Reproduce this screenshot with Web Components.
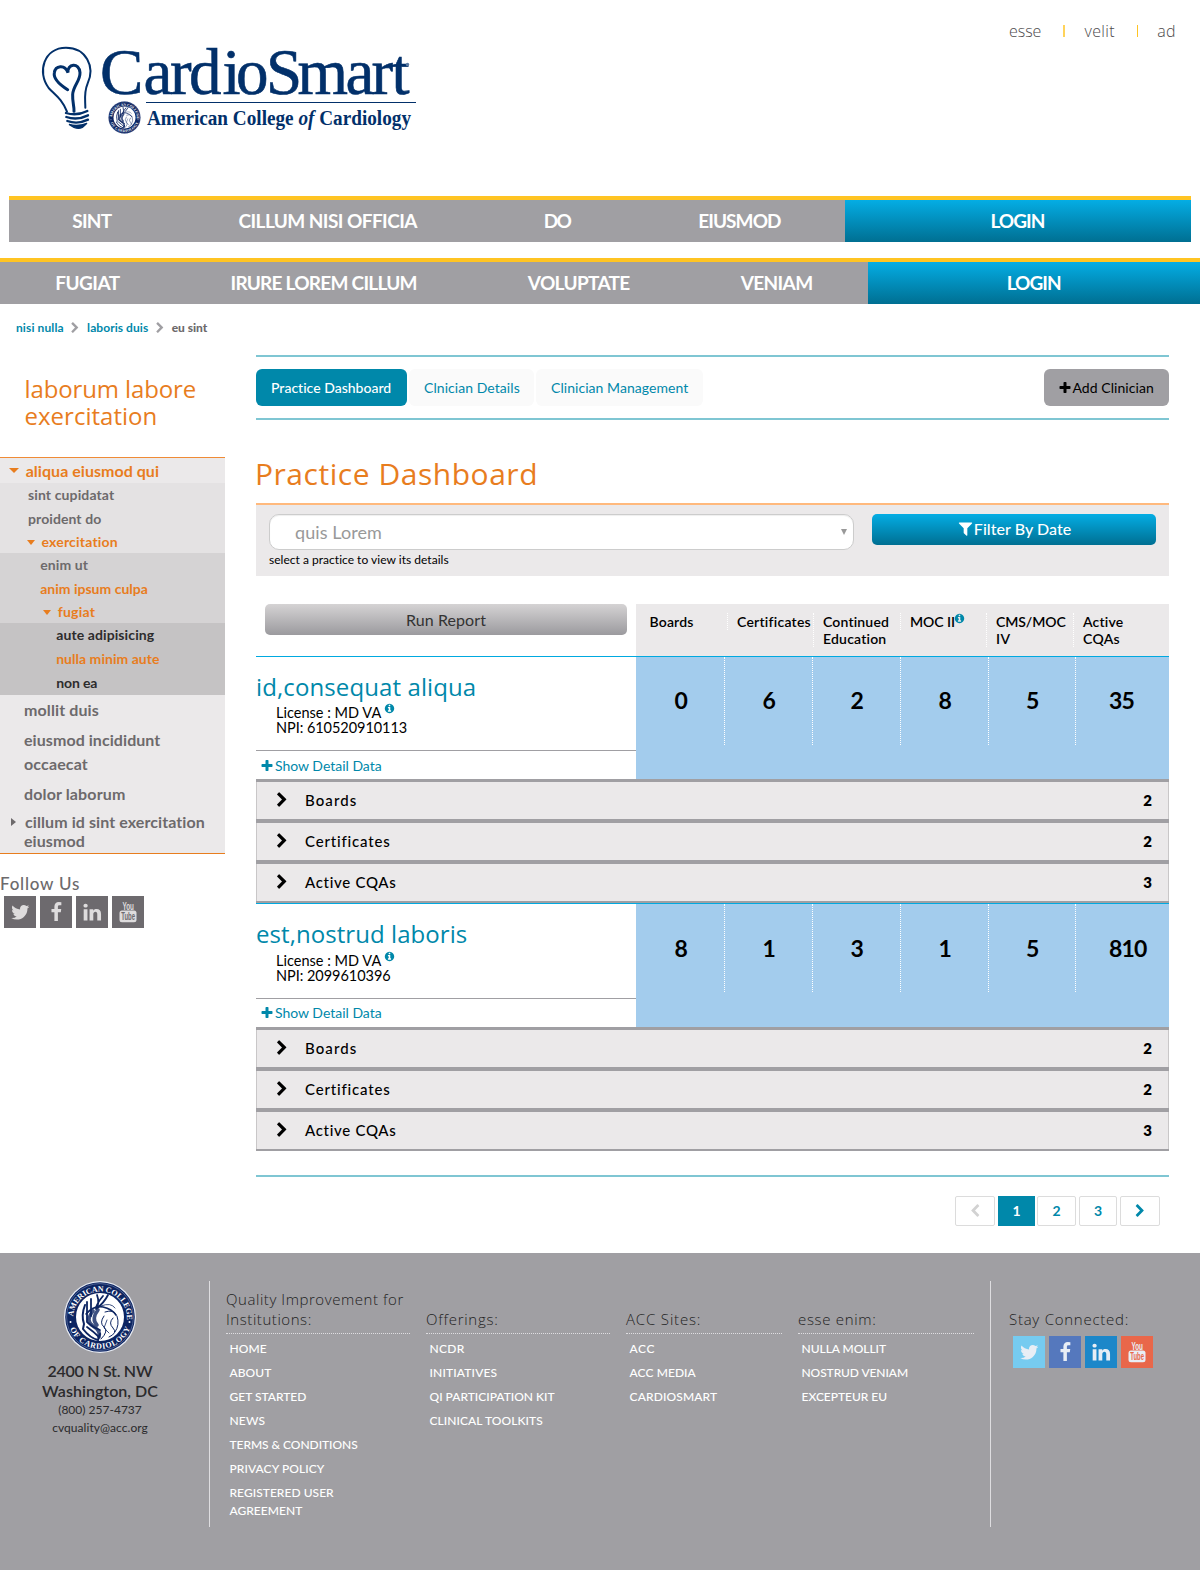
<!DOCTYPE html>
<html lang="en">
<head>
<meta charset="utf-8">
<title>Practice Dashboard</title>
<style>
body{margin:0;background:#fff;font-family:Lato,"Liberation Sans",sans-serif;color:#000;--teal:#0088aa;--orange:#e87d1e;--grey:#a09fa3;--text:#6d6a6c;--panel:#ebe9ea;--thin:"Open Sans","Noto Sans",sans-serif}
</style>
</head>
<body>
<app-page></app-page>
<script>
const ICONS={
chevron:'M1363 877l-742 742q-19 19-45 19t-45-19l-166-166q-19-19-19-45t19-45l531-531-531-531q-19-19-19-45t19-45l166-166q19-19 45-19t45 19l742 742q19 19 19 45t-19 45z',
plus:'M1600 736v192q0 40-28 68t-68 28h-416v416q0 40-28 68t-68 28h-192q-40 0-68-28t-28-68v-416h-416q-40 0-68-28t-28-68v-192q0-40 28-68t68-28h416v-416q0-40 28-68t68-28h192q40 0 68 28t28 68v416h416q40 0 68 28t28 68z',
filter:'M1595 295q17 41-14 70l-493 493v742q0 42-39 59-13 5-25 5-27 0-45-19l-256-256q-19-19-19-45v-486l-493-493q-31-29-14-70 17-39 59-39h1280q42 0 59 39z',
info:'M1152 1376v-160q0-14-9-23t-23-9h-96v-512q0-14-9-23t-23-9h-320q-14 0-23 9t-9 23v160q0 14 9 23t23 9h96v320h-96q-14 0-23 9t-9 23v160q0 14 9 23t23 9h448q14 0 23-9t9-23zm-128-896v-160q0-14-9-23t-23-9h-192q-14 0-23 9t-9 23v160q0 14 9 23t23 9h192q14 0 23-9t9-23zm640 416q0 209-103 385.5t-279.5 279.5-385.5 103-385.5-103-279.5-279.5-103-385.5 103-385.5 279.5-279.5 385.5-103 385.5 103 279.5 279.5 103 385.5z',
twitter:'M1684 408q-67 98-162 167 1 14 1 42 0 130-38 259.5t-115.5 248.5-184.5 210.5-258 146-323 54.5q-271 0-496-145 35 4 78 4 225 0 401-138-105-2-188-64.5t-114-159.5q33 5 61 5 43 0 85-11-112-23-185.5-111.5t-73.5-205.5v-4q68 38 146 41-66-44-105-115t-39-154q0-88 44-163 121 149 294.5 238.5t371.5 99.5q-8-38-8-74 0-134 94.5-228.5t228.5-94.5q140 0 236 102 109-21 205-78-37 115-142 178 93-10 186-50z',
facebook:'M1343 12v264h-157q-86 0-116 36t-30 108v189h293l-39 296h-254v759h-306v-759h-255v-296h255v-218q0-186 104-288.5t277-102.5q147 0 228 12z',
linkedin:'M477 625v991h-330v-991h330zm21-306q1 73-50.5 122t-135.5 49h-2q-82 0-132-49t-50-122q0-74 51.5-122.5t134.5-48.5 133 48.5 51 122.5zm1166 729v568h-329v-530q0-105-40.5-164.5t-126.5-59.5q-63 0-105.5 34.5t-63.5 85.5q-11 30-11 81v553h-329q2-399 2-647t-1-296l-1-48h329v144h-2q20-32 41-56t56.5-52 87-43.5 114.5-15.5q171 0 275 113.5t104 332.5z'
};
const define=(name,css,html,after)=>customElements.define(name,class extends HTMLElement{
  connectedCallback(){
    if(this.shadowRoot)return;
    const root=this.attachShadow({mode:'open'});
    root.innerHTML=`<style>*{box-sizing:border-box}:host{display:block;box-sizing:border-box}${css}</style>`+(typeof html==='function'?html(this):html);
    if(after)after(this,root);
  }
});
const T=(w,t)=>`<fit-text w="${w}">${t}</fit-text>`;
const attr=(el,n)=>el.getAttribute(n)||'';

define('fa-icon',`:host{display:inline-block;width:var(--s,14px);height:var(--s,14px);flex:none}svg{display:block;width:100%;height:100%;fill:currentColor}`,
 el=>`<svg viewBox="0 0 1792 1792"><path d="${ICONS[attr(el,'name')]}"/></svg>`);

define('acc-seal',`svg{display:block;width:100%;height:100%;overflow:visible}text{font:bold 8px "Liberation Serif",serif;fill:#fff}`,
 `<svg viewBox="0 0 72 72"><defs><path id="up" d="M9 37.500A27 27 0 1 1 63 37.500"/><path id="dn" d="M3.800 38A32.300 32.300 0 0 0 68.200 38"/></defs>
 <circle cx="36" cy="36" r="36" fill="#e8ecf4"/><circle cx="36" cy="36" r="34.8" fill="#0c2461"/><circle cx="36" cy="36" r="33.4" fill="none" stroke="#8c9cc0" stroke-width=".5"/>
 <circle cx="36" cy="36" r="24" fill="#fff"/>
 <text textLength="84"><textPath href="#up" startOffset="2">AMERICAN COLLEGE</textPath></text>
 <text textLength="77"><textPath href="#dn" startOffset="10">OF CARDIOLOGY</textPath></text>
 <circle cx="6.500" cy="41" r="1" fill="#fff"/><circle cx="65.500" cy="41" r="1" fill="#fff"/>
 <g fill="none" stroke="#0c2461" stroke-linecap="round"><path d="M21 24q-4 10-1 19l-1 5q7 9 15 11l2-6" stroke-width="2"/><path d="M23 21v20M27 18v17M33 14q3 8-1 14M39 15q-6 7-7 12M44 14q-4 8-12 14M23 46q7 5 12 10M24 42q6 5 12 7" stroke-width="1.800"/><path d="M22 33q8-9 17-7t13 8" stroke-width="1.600"/><path d="M29 30q-8 10 0 15t6 11M34 29q-7 9-1 15" stroke-width="3.600" opacity=".8"/><path d="M41 31q9-3 11 3M40 35q-5 7 0 11t-3 12M49 37q-5 5 0 10t-4 9M53 35q3 9-2 16" stroke-width="1"/><path d="M37 25q10-4 14 2M43 39l-3 8 5 5" stroke-width=".8"/></g></svg>`);

define('brand-logo',`:host{position:relative;width:440px;height:150px}svg{display:block}acc-seal{position:absolute;left:108px;top:101px;width:33px;height:33px}text{font-family:"Liberation Serif",serif;fill:#02306a}`,
 `<svg width="440" height="150" viewBox="0 0 440 150"><g transform="translate(0 20) scale(.33333)" fill="none" stroke="#02306a" stroke-linecap="round">
 <path d="M201 275C187 238 166 225 146 204C110 156 132 83 198 83C258 83 286 140 263 190C251 218 256 240 256 263" stroke-width="6"/>
 <path d="M203 209C178 193 160 175 163 158C166 137 194 131 204 158C200 132 238 125 240 158C241 184 219 197 218 224C217 248 223 259 222 274" stroke-width="9"/>
 <path d="M198 279Q230 289 262 273M199 291Q232 302 264 286M202 303Q233 314 264 299" stroke-width="7"/><path d="M207 313Q233 320 261 310L247 322Q236 328 222 322z" fill="#02306a" stroke-width="4"/></g>
 <text x="100 143.500 170 189 222.500 236 266 297.500 345.500 371.500 391.500" y="94" font-size="65" stroke="#02306a" stroke-width=".6">CardioSmart</text><circle cx="407.500" cy="64.500" r="1.700" fill="#5c7ca3"/>
 <path d="M146 102.500H416" stroke="#02306a"/>
 <text x="147" y="125" font-size="20.500" font-weight="bold" textLength="264" lengthAdjust="spacingAndGlyphs">American College <tspan font-style="italic">of</tspan> Cardiology</text></svg><acc-seal></acc-seal>`);

define('top-links',`:host{display:flex;align-items:center;height:22px;font:300 16px/22px var(--thin);color:#4d4a4c;padding-right:24.500px}i{width:1px;height:12px;background:#ffc423;margin:0 19.500px 0 22px}i.a{width:2px;opacity:.75;margin-left:22px;margin-right:19px}`,
 `${T(31.5,'esse')}<i class="a"></i>${T(29.5,'velit')}<i></i>${T(17.5,'ad')}`);

define('nav-bar',`:host{display:flex;height:46px;border-top:4px solid #ffc423;background:var(--grey);color:#fff;font:bold 19px/42px Lato,sans-serif}.i{flex:none;padding:0 var(--p)}.l{flex:1;text-align:center;background:linear-gradient(#04ade4,#006f92)}`,
 el=>attr(el,'items').split('|').map(x=>{const[t,w]=x.split(':');return`<div class="i">${T(w,t)}</div>`}).join('')+`<div class="l">${T(54,'LOGIN')}</div>`);

define('bread-crumb',`:host{display:flex;align-items:center;height:20px;padding-left:16px;font:bold 12px/20px Lato,sans-serif;color:var(--teal)}fa-icon{--s:12px;color:var(--grey);margin:0 6px 0 5.500px}b{color:var(--text)}`,
 `${T(47,'nisi nulla')}<fa-icon name="chevron"></fa-icon>${T(60.5,'laboris duis')}<fa-icon name="chevron"></fa-icon><b>${T(35,'eu sint')}</b>`);

define('menu-item',`:host{display:flex;align-items:center;height:var(--h,24px);line-height:var(--h,24px);padding-left:var(--x)}:host([active]){color:var(--orange)}:host([top]) i{margin-right:8px}i{width:0;height:0;margin-right:6.500px;flex:none}.down{border:4.500px solid transparent;border-bottom:0;border-top:5px solid}.right{border:4.500px solid transparent;border-right:0;border-left:5px solid}:host([top]) .right{margin-right:9px}:host([top]) .down{border-width:5px 5px 0;margin-right:7px}`,
 el=>`${attr(el,'caret')?`<i class="${attr(el,'caret')}"></i>`:''}<slot></slot>`);
const M=(x,h,w,t,e='')=>`<menu-item style="--x:${x}px;--h:${h}px" ${e}>${T(w,t)}</menu-item>`;
define('side-menu',`:host{width:225px;border-top:1px solid #ef8b36;border-bottom:1px solid var(--orange);background:var(--panel);font:bold 16px/24px Lato,sans-serif;color:var(--text)}section{font-size:14px}.a{background:#e4e2e3}.b{background:#d5d3d4}.c{background:#c5c3c4;color:#2d2c2d}`,
 M(8.7,25,132.5,'aliqua eiusmod qui','active top caret="down"')+
 `<section class="a">${M(28,24,85.5,'sint cupidatat')}${M(28,24,72.5,'proident do')}${M(27,22,75.5,'exercitation','active caret="down"')}</section>
 <section class="b">${M(40.2,24,47,'enim ut')}${M(40.2,24,107,'anim ipsum culpa','active')}${M(43.2,22,36.5,'fugiat','active caret="down"')}</section>
 <section class="c">${M(56.2,24,97.3,'aute adipisicing')}${M(56.2,24,102.5,'nulla minim aute','active')}${M(56.2,24,40.5,'non ea')}</section>
 <div style="padding-top:3px">${M(24,24,74,'mollit duis')}</div><div style="padding-top:6px">${M(24,24,135.5,'eiusmod incididunt')}${M(24,24,63,'occaecat')}</div>
 <div style="padding-top:6px">${M(24,24,100.5,'dolor laborum')}</div><div style="padding:6px 0 3px">${M(11,20,179,'cillum id sint exercitation','top caret="right"')}${M(24,18,60,'eiusmod')}</div>`);

define('social-row',`:host{display:flex;gap:4px}span{width:32px;height:32px;display:grid;place-items:center;background:var(--c,#6d6a6e);color:#dedcdd}svg{display:block;overflow:visible}:host([colour]) span{color:#e8eef5}fa-icon{--s:20.500px}text{font:bold 10px "Liberation Sans",sans-serif}`,
 el=>{const c=el.hasAttribute('colour')?['#76cbf0','#5578bd','#1c87c9','#e9674a']:[];const s=i=>c[i]?`style="--c:${c[i]}"`:'';
 return`<span ${s(0)}><fa-icon name="twitter"></fa-icon></span><span ${s(1)}><fa-icon name="facebook"></fa-icon></span><span ${s(2)}><fa-icon name="linkedin"></fa-icon></span><span ${s(3)}><svg width="18" height="22" viewBox="0 0 18 22" fill="currentColor"><text x="3.500" y="8.600" style="font-size:11px" textLength="11.500" lengthAdjust="spacingAndGlyphs">You</text><rect x=".500" y="9.600" width="17" height="11.700" rx="2.500"/><text x="2.200" y="19.300" textLength="13.800" lengthAdjust="spacingAndGlyphs" style="fill:${c[3]||'#6d6a6e'}">Tube</text></svg></span>`});

define('tab-bar',`:host{display:flex;align-items:center;height:65px;border-top:2px solid #7fc6d3;border-bottom:2px solid #7fc6d3;font:14px/37px Lato,sans-serif;color:var(--teal)}div{height:37px;border-radius:6px;background:#fafafa;padding:0 15px;margin-right:2px}.on{background:var(--teal);color:#fff;width:151px;font-weight:500}.add{margin:0 0 0 auto;background:var(--grey);color:#000;display:flex;align-items:center;width:125px}fa-icon{--s:14px;margin-right:1px;margin-left:-1.500px}`,
 `<div class="on">${T(119.5,'Practice Dashboard')}</div><div style="width:125px">${T(95,'Clnician Details')}</div><div style="width:167px">${T(136.5,'Clinician Management')}</div><div class="add"><fa-icon name="plus"></fa-icon>${T(80.5,'Add Clinician')}</div>`);

define('filter-panel',`:host{display:flex;height:73px;border-top:2px solid #ffb97d;background:var(--panel);padding:9px 13px 0;gap:18px}.sel{display:flex;align-items:center;justify-content:space-between;width:585px;height:36px;background:#fff;border:1px solid #ccc;border-radius:10px;box-shadow:inset 0 1px 1px #0001;font-size:18px;color:#999;padding:0 6px 0 25px}.sel i{border:3px solid transparent;border-top:6px solid #999;border-bottom:0}.h{font:12px/20px Lato,sans-serif}.btn{flex:1;height:31px;border-radius:5px;background:linear-gradient(#04ade4,#006f92);color:#fff;display:flex;align-items:center;justify-content:center;font-size:16px;font-weight:500;line-height:29px;padding-bottom:2px}fa-icon{--s:17px;margin-right:0}`,
 `<div><div class="sel">${T(86,'quis Lorem')}<i></i></div><div class="h">${T(179,'select a practice to view its details')}</div></div><div class="btn"><fa-icon name="filter"></fa-icon>${T(96.5,'Filter By Date')}</div>`);

define('score-head',`:host{display:flex;height:53px;border-bottom:1px solid #00a9e0}.l{width:380px;padding:0 9px}.btn{height:31px;border-radius:5px;background:linear-gradient(#d5d3d4,#9b9a9e);color:#333;text-align:center;font-size:16px;line-height:31px}.r{flex:1;display:flex;align-items:flex-start;background:var(--panel);padding-top:9px;font:600 14px/17px Lato,sans-serif;white-space:nowrap}.r div{border-left:1px dotted #fff;padding-left:9px;min-height:17px;display:flex;flex-direction:column;align-items:flex-start}.r div:first-child{border-color:transparent;padding-left:12.500px}.m{flex-direction:row!important}fa-icon{--s:11px;color:var(--teal);margin-left:-1px}`,
 `<div class="l"><div class="btn">${T(79,'Run Report')}</div></div><div class="r"><div style="width:91px">${T(43.2,'Boards')}</div><div style="width:86px">${T(73,'Certificates')}</div><div style="width:87px">${T(65.2,'Continued')}${T(62.5,'Education')}</div><div class="m" style="width:86px">${T(44.4,'MOC II')}<fa-icon name="info"></fa-icon></div><div style="width:87px">${T(69,'CMS/MOC')}${T(13.5,'IV')}</div><div>${T(39.5,'Active')}${T(36,'CQAs')}</div></div>`);

define('clinician-card',`:host{display:flex;height:var(--h,122px)}.l{width:380px}.d{height:var(--d,93px);padding-top:14px}h3{margin:0;padding-left:0;height:var(--nh,34px);font:400 24px/32px var(--thin);color:var(--teal)}p{margin:0;padding-left:20px;display:flex;font:14.500px/15px Lato,sans-serif}p fa-icon{--s:11px;color:var(--teal);margin:-2px 0 0 3px}.s{border-top:1px solid var(--grey);height:29px;line-height:29px;display:flex;align-items:center;font-size:14px;color:var(--teal);padding:var(--sp,1px 0 0 4px)}.s fa-icon{--s:14px;margin-right:1px}.r{flex:1;display:flex;background:#a3cced;font:bold 23px/var(--nl,86px) Lato,sans-serif}.r div{height:88px;width:88px;padding-left:37.500px;border-left:1px dotted #fff}.r div:first-child{border-color:transparent}.r div:nth-child(4),.r div:nth-child(5){width:87.500px}.r div:last-child{padding-left:33px;letter-spacing:-.800px}`,
 el=>{const[n,w]=attr(el,'name').split(':'),[p,pw]=attr(el,'npi').split(':');return`<div class="l"><div class="d"><h3>${T(w,n)}</h3><p>${T(104.5,'License : MD VA')}<fa-icon name="info"></fa-icon></p><p>${T(pw,'NPI: '+p)}</p></div><div class="s"><fa-icon name="plus"></fa-icon>${T(106,'Show Detail Data')}</div></div><div class="r">${attr(el,'scores').split(' ').map(v=>`<div>${v}</div>`).join('')}</div>`});

define('fold-list',`:host{border-top:3px solid var(--grey);border-bottom:2px solid var(--grey)}div{display:flex;align-items:center;height:37px;background:var(--panel);border:solid #c9c7c8;border-width:0 1px;padding:0 16px 0 17px;font:500 15px/35px Lato,sans-serif}div+div{margin-top:4px;box-shadow:0 -4px 0 var(--grey)}fa-icon{--s:16px;margin:-2px 15px 0 0}b{margin-left:auto;font-weight:800}`,
 [['Boards',50.5,2],['Certificates',84,2],['Active CQAs',90,3]].map(r=>`<div><fa-icon name="chevron"></fa-icon>${T(r[1],r[0])}<b>${r[2]}</b></div>`).join(''));

define('page-nav',`:host{display:flex;justify-content:flex-end;padding-right:9px;height:30px;font:bold 14px/28px Lato,sans-serif;color:var(--teal)}div{border:1px solid #dcdcdc;border-radius:2px;height:30px;display:flex;align-items:center;justify-content:center;margin-left:3px}fa-icon{--s:14px}`,
 `<div style="width:40px"><fa-icon name="chevron" style="color:#d2d2d2;transform:scaleX(-1)"></fa-icon></div><div style="width:37px;background:var(--teal);color:#fff;border-color:var(--teal);border-radius:0">1</div><div style="width:39px;margin-left:2px">2</div><div style="width:38px">3</div><div style="width:40px"><fa-icon name="chevron"></fa-icon></div>`);

define('link-column',`:host{width:var(--w);margin-right:16px}h4{display:flex;flex-direction:column;align-items:flex-start;justify-content:flex-end;height:53px;margin:0;padding-bottom:4px;border-bottom:1px dotted #dedde0;font:300 15px/20px var(--thin);color:#222}div{padding:6px 0 0 3.500px;font:500 12px/18px Lato,sans-serif;color:#fff;display:flex;flex-direction:column}`,
 el=>`<h4>${attr(el,'head').split('|').map(x=>{const[t,w]=x.split('=');return T(w,t)}).join('')}</h4>`+attr(el,'links').split('|').map(x=>`<div>${x.split('/').map(y=>{const[t,w]=y.split('=');return T(w,t.replace('&','&amp;'))}).join('')}</div>`).join(''));

define('site-footer',`:host{display:flex;height:317px;background:var(--grey);padding-top:28px}.a{width:209px;padding-right:9px;height:246px;display:flex;flex-direction:column;align-items:center;color:#2b2a2c;font:600 16px/20px Lato,sans-serif}acc-seal{width:72px;height:72px;margin-bottom:8px}.sm{font:400 12px/18px Lato,sans-serif}.c{display:flex;height:246px;border:solid #dedde0;border-width:0 1px;width:782px;padding-left:16px}.s{padding:28px 0 0 18px;font:300 15px/20px var(--thin);color:#222}social-row{margin:7px 0 0 4px}`,
 `<div class="a"><acc-seal></acc-seal>${T(104.4,'2400 N St. NW')}${T(115,'Washington, DC')}<div class="sm">${T(83,'(800) 257-4737')}</div><div class="sm">${T(95,'cvquality@acc.org')}</div></div>
 <div class="c"><link-column style="--w:184px" head="Quality Improvement for=176.500|Institutions:=84.500" links="HOME=36.600|ABOUT=41.200|GET STARTED=76.300|NEWS=35|TERMS & CONDITIONS=127.600|PRIVACY POLICY=94.300|REGISTERED USER=103.600/AGREEMENT=72.200"></link-column>
 <link-column style="--w:184px" head="Offerings:=71" links="NCDR=34.300|INITIATIVES=67|QI PARTICIPATION KIT=124.500|CLINICAL TOOLKITS=112.600"></link-column>
 <link-column style="--w:156px" head="ACC Sites:=73.700" links="ACC=24.400|ACC MEDIA=65.700|CARDIOSMART=87"></link-column>
 <link-column style="--w:176px" head="esse enim:=77" links="NULLA MOLLIT=84|NOSTRUD VENIAM=106|EXCEPTEUR EU=85"></link-column></div>
 <div class="s">${T(118.500,'Stay Connected:')}<social-row colour></social-row></div>`);

define('app-page',`:host{width:1200px}header{display:flex;justify-content:space-between;height:196px}top-links{margin-top:20px}.mid{display:flex;height:916px}aside{width:256px;padding-top:38px}h2{margin:0 0 28px;padding-left:24.500px;font:400 24px/27px var(--thin);color:var(--orange);display:flex;flex-direction:column;align-items:flex-start}.f{height:23px;margin-top:18px;font:500 17px/23px Lato,sans-serif;color:var(--text)}main{width:913px;padding-top:18px}h1{margin:30px 0 0;height:53px;font:400 30px/48px var(--thin);color:var(--orange);text-indent:-1px}score-head{margin-top:28px}page-nav{margin-top:19px}fold-list+clinician-card{border-top:1px solid #00a9e0}`,
 `<header><brand-logo></brand-logo><top-links></top-links></header>
 <nav-bar style="margin:0 9px 16px;--p:63.200px" items="SINT:39|CILLUM NISI OFFICIA:178|DO:27|EIUSMOD:82.500"></nav-bar>
 <nav-bar style="--p:55.200px" items="FUGIAT:64|IRURE LOREM CILLUM:186|VOLUPTATE:101.500|VENIAM:71.500"></nav-bar>
 <div style="padding:14px 0 0;height:33px"><bread-crumb></bread-crumb></div>
 <div class="mid"><aside><h2>${T(170.5,'laborum labore')}${T(131.5,'exercitation')}</h2><side-menu></side-menu><div class="f">${T(78.5,'Follow Us')}</div><social-row style="margin:1px 0 0 4px"></social-row></aside>
 <main><tab-bar></tab-bar><h1>${T(281,'Practice Dashboard')}</h1><filter-panel></filter-panel><score-head></score-head>
 <clinician-card name="id,consequat aliqua:219" npi="610520910113:130.500" scores="0 6 2 8 5 35"></clinician-card><fold-list></fold-list>
 <clinician-card style="--h:124px;--d:94px;--sp:0 0 1px 4px;--nl:88px;--nh:35px" name="est,nostrud laboris:210" npi="2099610396:114" scores="8 1 3 1 5 810"></clinician-card><fold-list></fold-list>
 <div style="border-top:2px solid #7fc6d3;margin-top:24px"></div><page-nav></page-nav></main></div><site-footer></site-footer>`);

/* Tracks a run of text so that it spans the width given in w, side bearings excluded. */
customElements.define('fit-text',class extends HTMLElement{
  connectedCallback(){
    if(this.shadowRoot)return;
    this.attachShadow({mode:'open'}).innerHTML='<style>:host{display:inline-block;white-space:nowrap;text-indent:0;font-variant-ligatures:none}</style><slot></slot>';
    const target=+this.getAttribute('w')+parseFloat(getComputedStyle(this).fontSize)*.05;
    const range=document.createRange();range.selectNodeContents(this);
    const now=range.getBoundingClientRect().width,n=this.textContent.length;
    if(now){const ls=(target-now)/(n-1);this.style.letterSpacing=ls+'px';this.style.marginRight=-ls+'px';}
  }
});
</script>
</body>
</html>
